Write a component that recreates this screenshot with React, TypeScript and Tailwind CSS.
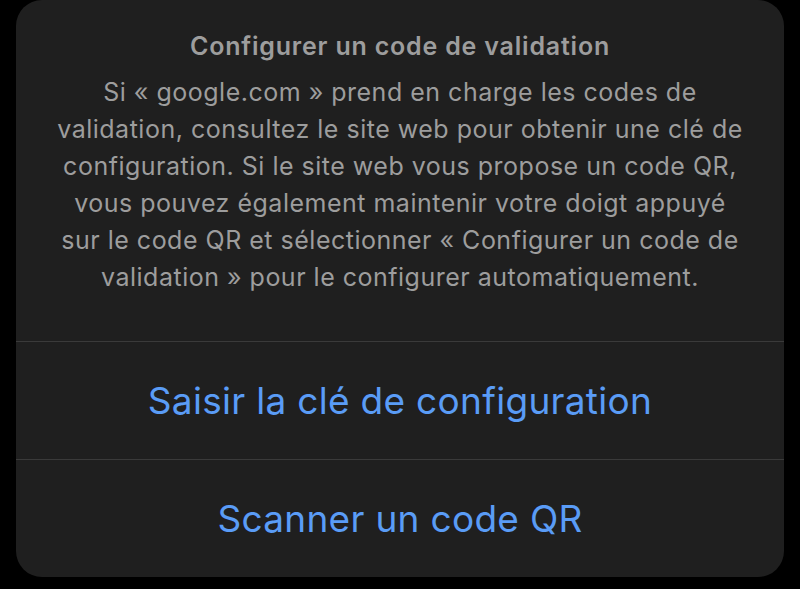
export default function App() {
  const actions = ["Saisir la clé de configuration", "Scanner un code QR"];
  const lines = [
    "Si « google.com » prend en charge les codes de",
    "validation, consultez le site web pour obtenir une clé de",
    "configuration. Si le site web vous propose un code QR,",
    "vous pouvez également maintenir votre doigt appuyé",
    "sur le code QR et sélectionner « Configurer un code de",
    "validation » pour le configurer automatiquement.",
  ];

  return (
    <div className="h-[589px] w-[800px] overflow-hidden bg-black px-4 pb-3 font-['Inter','Noto_Sans',sans-serif]">
      <div className="flex h-[577px] flex-col overflow-hidden rounded-[26px] bg-[#1f1f1f]">
        <div className="flex h-[342px] flex-col items-center pt-[31px] text-center text-[#9d9d9d]">
          <h2 className="text-[25px] font-semibold leading-[30px] tracking-[0.8px]">Configurer un code de validation</h2>
          <p className="mt-[13px] text-[25px] leading-[37px] tracking-[0.5px] whitespace-nowrap">
            {lines.map((line) => (
              <span key={line} className="block">
                {line}
              </span>
            ))}
          </p>
        </div>
        {actions.map((label) => (
          <button
            key={label}
            className="flex h-[118px] shrink-0 items-center justify-center border-t border-[#3a3a3a] text-[37px] tracking-[0.3px] text-[#5a9cf6]"
          >
            {label}
          </button>
        ))}
      </div>
    </div>
  );
}
